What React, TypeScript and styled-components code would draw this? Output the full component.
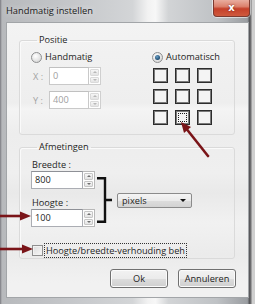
import styled, { createGlobalStyle } from 'styled-components'

const GlobalStyle = createGlobalStyle`
  html, body {
    margin: 0;
    padding: 0;
    background: #ffffff;
  }
  body {
    font-family: 'Open Sans', 'Noto Sans', sans-serif;
    font-size: 9.2px;
    color: #1e1e1e;
  }
`

const ARROW = '#7a1418'

const Window = styled.div`
  position: relative;
  width: 255px;
  height: 304px;
  display: flex;
  flex-direction: column;
  overflow: hidden;
  background: linear-gradient(
    90deg,
    #7a7a80 0px,
    #b7b9bc 2px,
    #c6c8cb 30%,
    #d3d5d7 52%,
    #f2f2f2 58%,
    #f7f7f7 61%,
    #d2d4d6 66%,
    #bfc2c5 85%,
    #9a9da1 97%,
    #4c4c4f 98%,
    #cfcfcf 99%
  );
`

const TitleBar = styled.div`
  flex: none;
  height: 22px;
  display: flex;
  align-items: flex-start;
  padding-left: 6px;
`

const Title = styled.div`
  margin-top: 4px;
  font-size: 9.3px;
  color: #1a1a1a;
  text-shadow: 0 0 6px rgba(255, 255, 255, 0.8);
`

const CloseButton = styled.div`
  margin-left: auto;
  margin-right: 5px;
  width: 35px;
  height: 16px;
  border: 1px solid #7d3a30;
  border-top: none;
  border-radius: 0 0 4px 4px;
  box-shadow: 0 0 0 1px rgba(255, 255, 255, 0.55);
  background: linear-gradient(#e9ad9f 0%, #dc826e 40%, #c5402a 55%, #cf5a3e 100%);
  display: flex;
  align-items: center;
  justify-content: center;
  color: #ffffff;
  font-family: 'DejaVu Sans', sans-serif;
  font-weight: 700;
  font-size: 10px;
  line-height: 1;
  text-shadow: 0 0 2px #6a1a10;
`

const Frame = styled.div`
  flex: 1;
  display: flex;
  padding: 0 6px 6px 6px;
`

const Client = styled.div`
  flex: 1;
  display: flex;
  flex-direction: column;
  padding: 11px 13px 0 12px;
  border: 1px solid #a2a5a8;
  background: linear-gradient(
    180deg,
    #f3f3f3 0px,
    #eeeeee 80px,
    #f4f4f4 86px,
    #ededed 110px,
    #efefef 150px,
    #e9e9e9 170px,
    #f1f1f1 200px,
    #ebebeb 232px,
    #f1f1f1 260px
  );
`

const Group = styled.fieldset<{ $gap?: number }>`
  margin: ${(p) => p.$gap ?? 0}px 0 0 0;
  padding: 0 0 0 11px;
  min-width: 0;
  border: 1px solid #dadada;
  border-radius: 3px;
  box-shadow: inset 1px 1px 0 #fafafa;
`

const Legend = styled.legend`
  margin-left: 6px;
  padding: 0 2px;
  line-height: 12px;
`

const PositionBody = styled.div`
  display: grid;
  grid-template-columns: 121px auto;
  padding: 5px 0 9px 0;
`

const Column = styled.div`
  display: flex;
  flex-direction: column;
`

const RadioRow = styled.label`
  display: flex;
  align-items: center;
  gap: 3px;
  height: 12px;
  line-height: 12px;
`

const Radio = styled.span<{ $checked?: boolean }>`
  width: 9px;
  height: 9px;
  border-radius: 50%;
  border: 1px solid #8f9091;
  background: radial-gradient(circle at 40% 35%, #ffffff 0%, #e2e2e2 60%, #cfcfcf 100%);
  display: flex;
  align-items: center;
  justify-content: center;
  &::after {
    content: '';
    display: ${(p) => (p.$checked ? 'block' : 'none')};
    width: 5px;
    height: 5px;
    border-radius: 50%;
    background: radial-gradient(circle at 40% 35%, #6aa0c8 0%, #1d4a6e 70%);
  }
`

const FieldRow = styled.div<{ $top: number }>`
  display: flex;
  align-items: center;
  margin-top: ${(p) => p.$top}px;
`

const FieldLabel = styled.span<{ $disabled?: boolean }>`
  width: 16px;
  padding-left: 2px;
  color: ${(p) => (p.$disabled ? '#a3a3a3' : '#1e1e1e')};
`

const Input = styled.div<{ $width: number; $disabled?: boolean }>`
  width: ${(p) => p.$width}px;
  height: 18px;
  box-sizing: border-box;
  border: 1px solid ${(p) => (p.$disabled ? '#c9c9c9' : '#abadb3')};
  border-top-color: ${(p) => (p.$disabled ? '#c0c0c0' : '#8e9096')};
  background: #ffffff;
  padding-left: 3px;
  line-height: 16px;
  color: ${(p) => (p.$disabled ? '#a0a0a0' : '#1e1e1e')};
`

const Spinner = styled.div<{ $disabled?: boolean }>`
  width: 12px;
  height: 18px;
  box-sizing: border-box;
  border: 1px solid ${(p) => (p.$disabled ? '#cfcfcf' : '#b8b8b8')};
  border-left: none;
  background: #ffffff;
  display: flex;
  flex-direction: column;
  padding: 1px;
  gap: 1px;
`

const SpinHalf = styled.div<{ $down?: boolean; $disabled?: boolean }>`
  flex: 1;
  border-radius: 1px;
  background: linear-gradient(#f6f6f6, #e4e4e4);
  border: 1px solid ${(p) => (p.$disabled ? '#dadada' : '#c6c6c6')};
  display: flex;
  align-items: center;
  justify-content: center;
  &::after {
    content: '';
    width: 0;
    height: 0;
    border-left: 2px solid transparent;
    border-right: 2px solid transparent;
    ${(p) => (p.$down ? 'border-top' : 'border-bottom')}: 2px solid
      ${(p) => (p.$disabled ? '#b8b8b8' : '#6f6f6f')};
  }
`

const SquareGrid = styled.div`
  display: grid;
  grid-template-columns: repeat(3, 15px);
  grid-auto-rows: 15px;
  column-gap: 7px;
  row-gap: 6px;
  margin: 5px 0 0 1px;
`

const Square = styled.div<{ $focused?: boolean }>`
  box-sizing: border-box;
  border: 1px solid #2c2c2c;
  box-shadow: inset 0 0 0 1px #7b7b7b;
  background: #f4f4f4;
  outline: ${(p) => (p.$focused ? '1px dotted #1a1a1a' : 'none')};
  outline-offset: -4px;
`

const SizeBody = styled.div`
  display: flex;
  flex-direction: column;
  padding: 6px 0 1px 0;
`

const SizeRow = styled.div`
  display: flex;
  align-items: flex-start;
`

const StackLabel = styled.div<{ $top?: number }>`
  line-height: 11px;
  margin: ${(p) => p.$top ?? 0}px 0 1px 1px;
`

const Bracket = styled.svg`
  margin: 18px 0 0 2px;
  flex: none;
`

const Select = styled.div`
  margin: 34px 0 0 5px;
  width: 75px;
  height: 15px;
  box-sizing: border-box;
  border: 1px solid #8b8b8b;
  border-radius: 2px;
  background: linear-gradient(#f4f4f4 0%, #ebebeb 50%, #dddddd 51%, #d3d3d3 100%);
  display: flex;
  align-items: center;
  padding: 0 5px 0 4px;
  line-height: 13px;
  &::after {
    content: '';
    margin-left: auto;
    border-left: 3px solid transparent;
    border-right: 3px solid transparent;
    border-top: 3px solid #111111;
  }
`

const CheckRow = styled.label`
  display: flex;
  align-items: center;
  gap: 2px;
  margin: 16px 0 0 1px;
  height: 14px;
`

const Checkbox = styled.span`
  width: 11px;
  height: 11px;
  box-sizing: border-box;
  border: 1px solid #8f8f8f;
  background: linear-gradient(135deg, #dcdcdc, #f7f7f7);
  box-shadow: inset 0 0 0 1px #f2f2f2;
`

const CheckText = styled.span`
  outline: 1px dotted #333333;
  outline-offset: 0;
  padding: 0 1px;
  line-height: 13px;
  white-space: nowrap;
`

const ButtonRow = styled.div`
  display: flex;
  justify-content: flex-end;
  gap: 10px;
  margin: 10px -1px 0 0;
`

const Button = styled.button`
  width: 58px;
  height: 19px;
  box-sizing: border-box;
  border: 1px solid #707070;
  border-radius: 3px;
  background: linear-gradient(#f2f2f2 0%, #ebebeb 50%, #dddddd 51%, #cfcfcf 100%);
  box-shadow: inset 0 0 0 1px #fbfbfb;
  font: inherit;
  color: #1e1e1e;
  padding: 0;
`

const Arrow = styled.svg<{ $left: number; $top: number }>`
  position: absolute;
  left: ${(p) => p.$left}px;
  top: ${(p) => p.$top}px;
  overflow: visible;
`

const Spin = ({ disabled }: { disabled?: boolean }) => (
  <Spinner $disabled={disabled}>
    <SpinHalf $disabled={disabled} />
    <SpinHalf $down $disabled={disabled} />
  </Spinner>
)

const squares = [0, 1, 2, 3, 4, 5, 6, 7, 8]

const App = () => {
  return (
    <>
      <GlobalStyle />
      <Window>
        <TitleBar>
          <Title>Handmatig instellen</Title>
          <CloseButton>x</CloseButton>
        </TitleBar>
        <Frame>
          <Client>
            <Group>
              <Legend>Positie</Legend>
              <PositionBody>
                <Column>
                  <RadioRow>
                    <Radio />
                    Handmatig
                  </RadioRow>
                  <FieldRow $top={4}>
                    <FieldLabel $disabled>X :</FieldLabel>
                    <Input $width={40} $disabled>0</Input>
                    <Spin disabled />
                  </FieldRow>
                  <FieldRow $top={6}>
                    <FieldLabel $disabled>Y :</FieldLabel>
                    <Input $width={40} $disabled>400</Input>
                    <Spin disabled />
                  </FieldRow>
                </Column>
                <Column>
                  <RadioRow>
                    <Radio $checked />
                    Automatisch
                  </RadioRow>
                  <SquareGrid>
                    {squares.map((i) => (
                      <Square key={i} $focused={i === 7} />
                    ))}
                  </SquareGrid>
                </Column>
              </PositionBody>
            </Group>

            <Group $gap={6}>
              <Legend>Afmetingen</Legend>
              <SizeBody>
                <SizeRow>
                  <Column>
                    <StackLabel>Breedte :</StackLabel>
                    <FieldRow $top={0}>
                      <Input $width={52}>800</Input>
                      <Spin />
                    </FieldRow>
                    <StackLabel $top={8}>Hoogte :</StackLabel>
                    <FieldRow $top={0}>
                      <Input $width={52}>100</Input>
                      <Spin />
                    </FieldRow>
                  </Column>
                  <Bracket width="15" height="46" viewBox="0 0 15 46">
                    <path d="M0 1.2 H8 V44.8 H0 M8 23 H15" fill="none" stroke="#111" strokeWidth="2.4" />
                  </Bracket>
                  <Select>pixels</Select>
                </SizeRow>
                <CheckRow>
                  <Checkbox />
                  <CheckText>Hoogte/breedte-verhouding beh</CheckText>
                </CheckRow>
              </SizeBody>
            </Group>

            <ButtonRow>
              <Button>Ok</Button>
              <Button>Annuleren</Button>
            </ButtonRow>
          </Client>
        </Frame>

        <Arrow $left={178} $top={118} width="32" height="40" viewBox="0 0 32 40">
          <line x1="30" y1="38" x2="7" y2="9" stroke={ARROW} strokeWidth="2.6" strokeLinecap="round" />
          <polygon points="3,4 13,9 6,15" fill={ARROW} />
        </Arrow>
        <Arrow $left={0} $top={211} width="32" height="10" viewBox="0 0 32 10">
          <line x1="0" y1="5" x2="22" y2="5" stroke={ARROW} strokeWidth="2.6" />
          <polygon points="31,5 20,0.5 20,9.5" fill={ARROW} />
        </Arrow>
        <Arrow $left={0} $top={244} width="34" height="10" viewBox="0 0 34 10">
          <line x1="0" y1="5" x2="24" y2="5" stroke={ARROW} strokeWidth="2.6" />
          <polygon points="33,5 22,0.5 22,9.5" fill={ARROW} />
        </Arrow>
      </Window>
    </>
  )
}

export default App
